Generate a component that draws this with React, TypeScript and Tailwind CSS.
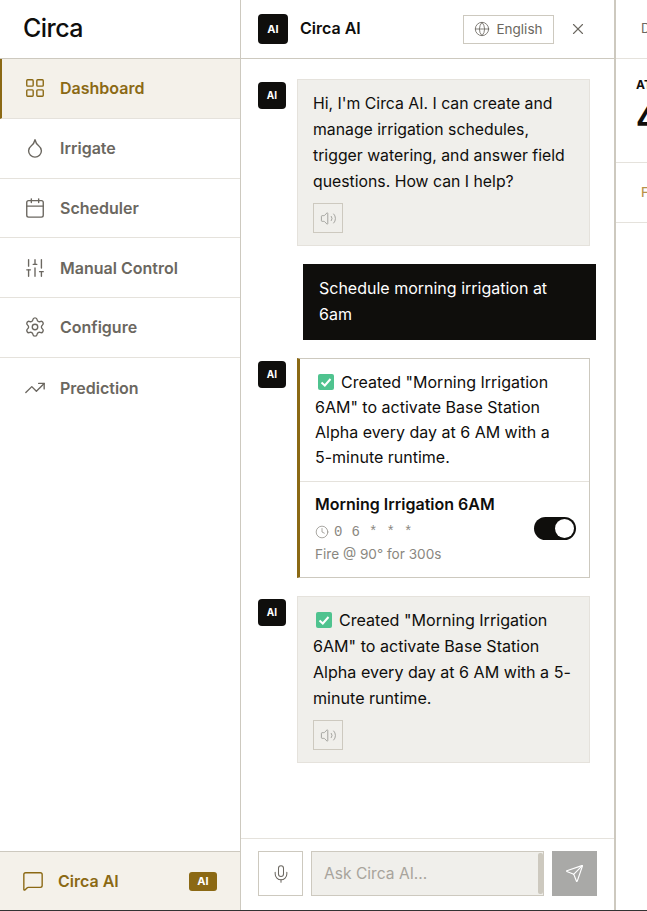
import { LayoutGrid, Droplet, Calendar, SlidersVertical, Settings, TrendingUp, MessageSquare, Mic, Send, Globe, X, Volume2, Clock } from "lucide-react";

const nav = [
  { label: "Dashboard", Icon: LayoutGrid },
  { label: "Irrigate", Icon: Droplet },
  { label: "Scheduler", Icon: Calendar },
  { label: "Manual Control", Icon: SlidersVertical },
  { label: "Configure", Icon: Settings },
  { label: "Prediction", Icon: TrendingUp },
];

function Avatar() {
  return (
    <div className="w-[28px] h-[27px] shrink-0 mt-[3px] rounded-[4px] bg-[#0f0e0c] flex items-center justify-center text-white text-[10px] font-bold">AI</div>
  );
}

function Check() {
  return (
    <svg viewBox="0 0 16 16" className="inline-block w-[16px] h-[16px] align-[-2px]">
      <rect width="16" height="16" rx="2" fill="#4fc38f" />
      <path d="M3.5 8.5 L6.8 11.5 L12.5 5" fill="none" stroke="#fff" strokeWidth="2" />
    </svg>
  );
}

function Speaker({ top }: { top: string }) {
  return (
    <div className={top + " w-[30px] h-[30px] border border-[#cdc9bf] flex items-center justify-center"}>
      <Volume2 size={17} strokeWidth={1.25} className="text-[#9a9a96]" />
    </div>
  );
}

export default function App() {
  return (
    <div className="w-[647px] h-[911px] flex overflow-hidden bg-white border-b border-[#333] text-[#0f0e0c] font-['Inter',sans-serif]">
      <aside className="w-[241px] shrink-0 border-r border-[#cdc9bf] flex flex-col">
        <div className="h-[59px] border-b border-[#cdc9bf] pl-[23px] flex items-center text-[25px] font-medium tracking-[-0.55px]">Circa</div>
        <nav className="flex-1">
          {nav.map(({ label, Icon }, i) => (
            <div
              key={label}
              className={
                i === 0
                  ? "h-[59.75px] flex items-center gap-[14px] pl-[22px] bg-[#f4f1ea] border-l-2 border-l-[#8b6914] border-b border-b-[#e5e2dc] text-[#8b6914] text-[16px] font-semibold"
                  : i === 5
                    ? "h-[59.75px] flex items-center gap-[14px] pl-[24px] text-[#6b6760] text-[16px] font-semibold"
                    : "h-[59.75px] flex items-center gap-[14px] pl-[24px] border-b border-b-[#e5e2dc] text-[#6b6760] text-[16px] font-semibold"
              }
            >
              <Icon size={22} strokeWidth={1.5} className="shrink-0" />
              <span>{label}</span>
            </div>
          ))}
        </nav>
        <div className="h-[59px] bg-[#f4f1ea] border-t border-[#cdc9bf] flex items-center pl-[22px] pr-[23px] text-[#8b6914] text-[16px] font-semibold">
          <MessageSquare size={22} strokeWidth={1.5} className="shrink-0" />
          <span className="ml-[14px] flex-1">Circa AI</span>
          <span className="w-[28px] h-[19px] rounded-[3px] bg-[#8b6914] text-white text-[11px] font-bold flex items-center justify-center">AI</span>
        </div>
      </aside>

      <section className="w-[373px] shrink-0 flex flex-col">
        <header className="h-[59px] border-b border-[#cdc9bf] flex items-center pl-[17px] pr-[27px]">
          <div className="w-[30px] h-[30px] rounded-[4px] bg-[#0f0e0c] flex items-center justify-center text-white text-[11px] font-bold">AI</div>
          <div className="ml-[12px] flex-1 text-[16px] font-semibold pb-[2px]">Circa AI</div>
          <div className="w-[91px] h-[29px] border border-[#cdc9bf] flex items-center justify-center gap-[6px] text-[#6b6760] text-[13.5px]">
            <Globe size={16} strokeWidth={1.25} />
            <span>English</span>
          </div>
          <X size={18} strokeWidth={1.5} className="ml-[15px] text-[#6b6760]" />
        </header>

        <div className="flex-1 pt-[20px] pl-[17px] flex flex-col gap-[18px] overflow-hidden">
          <div className="flex gap-[11px]">
            <Avatar />
            <div className="w-[293px] h-[167px] bg-[#f0efeb] border border-[#e5e2dc] pt-[11px] pl-[15px] pr-[15px] text-[15.8px] leading-[26px]">
              <p>Hi, I'm Circa AI. I can create and manage irrigation schedules, trigger watering, and answer field questions. How can I help?</p>
              <Speaker top="mt-[8px]" />
            </div>
          </div>

          <div className="ml-[45px] w-[293px] h-[76px] bg-[#0f0e0c] text-white pl-[16px] pr-[26px] pt-[11px] text-[16px] leading-[26px]">
            Schedule morning irrigation at 6am
          </div>

          <div className="flex gap-[11px]">
            <Avatar />
            <div className="w-[293px] h-[220px] border border-[#cdc9bf] border-l-[3px] border-l-[#8b6914]">
              <p className="h-[123px] border-b border-[#e5e2dc] pt-[11px] pl-[15px] pr-[24px] text-[16px] leading-[25px]">
                <span className="ml-[3px] mr-[7px]"><Check /></span>Created "Morning Irrigation 6AM" to activate Base Station Alpha every day at 6 AM with a 5-minute runtime.
              </p>
              <div className="flex items-center justify-between pl-[15px] pr-[13px]">
                <div>
                  <div className="mt-[11px] text-[16px] font-semibold leading-[22px]">Morning Irrigation 6AM</div>
                  <div className="mt-[8px] flex items-center gap-[5px] text-[#8a8780] text-[13px] leading-[18px]">
                    <Clock size={14} strokeWidth={1.25} />
                    <span className="font-['Liberation_Mono',monospace] text-[14px] tracking-[0.35px]">0 6 * * *</span>
                  </div>
                  <div className="mt-[4px] text-[#8a8780] text-[13.6px] leading-[18px]">Fire @ 90° for 300s</div>
                </div>
                <div className="w-[42px] h-[23px] rounded-full bg-[#0f0e0c] mt-[12px] flex items-center justify-end pr-[2px]">
                  <div className="w-[19px] h-[19px] rounded-full bg-white" />
                </div>
              </div>
            </div>
          </div>

          <div className="flex gap-[11px]">
            <Avatar />
            <div className="w-[293px] h-[167px] bg-[#f0efeb] border border-[#e5e2dc] pt-[10px] pl-[15px] pr-[14px] text-[16.1px] leading-[26px]">
              <p><span className="ml-[3px] mr-[7px]"><Check /></span>Created "Morning Irrigation 6AM" to activate Base Station Alpha every day at 6 AM with a 5-minute runtime.</p>
              <Speaker top="mt-[9px]" />
            </div>
          </div>
        </div>

        <div className="h-[72px] border-t border-[#e5e2dc] pt-[12px] pl-[17px] flex gap-[8px]">
          <div className="w-[45px] h-[45px] border border-[#cdc9bf] flex items-center justify-center text-[#6b6760]">
            <Mic size={20} strokeWidth={1.25} />
          </div>
          <div className="w-[233px] h-[45px] relative bg-[#f0efeb] border border-[#cdc9bf] flex items-center pl-[12px] text-[15.6px] text-[#a8a49c]">
            Ask Circa AI...
            <div className="absolute right-0 top-[1px] bottom-[1px] w-[5px] bg-[#cdc9bf] rounded-[2px]" />
          </div>
          <div className="w-[45px] h-[45px] bg-[#a9a9a7] flex items-center justify-center text-white">
            <Send size={19} strokeWidth={1.5} />
          </div>
        </div>
      </section>

      <main className="w-[33px] shrink-0 border-l-2 border-[#cdc9bf] overflow-hidden">
        <div className="h-[59px] border-b border-[#e5e2dc] pl-[25px] flex items-center text-[13px] text-[#6b6760] whitespace-nowrap">Dashboard</div>
        <div className="h-[104px] border-b border-[#e5e2dc] pl-[20px] pt-[18px] whitespace-nowrap">
          <div className="text-[12px] font-bold leading-[16px]">ATTENTION</div>
          <div className="text-[32px] font-bold leading-[40px] mt-[6px]">4</div>
        </div>
        <div className="h-[60px] border-b border-[#e5e2dc] pl-[25px] flex items-center text-[13px] font-medium text-[#b8924a] whitespace-nowrap">Fields</div>
      </main>
    </div>
  );
}
